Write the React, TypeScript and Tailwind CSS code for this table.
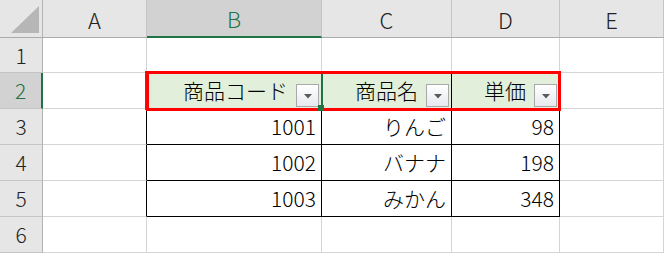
import React from "react";

const font = { fontFamily: '"Noto Sans CJK JP", "Noto Sans", sans-serif' };

function FilterButton() {
  return (
    <div className="ml-[8px] mr-[2px] mb-[1px] self-end w-[23px] h-[23px] border border-[#a9a9a9] bg-gradient-to-b from-white to-[#e6e9ef] flex items-center justify-center">
      <svg width="8" height="5" viewBox="0 0 8 5" className="mt-[2px]">
        <polygon points="0,0 8,0 4,4.5" fill="#5a5a5a" />
      </svg>
    </div>
  );
}

const hdr = "bg-[#e6e6e6] border-r border-b border-r-[#c4c4c4] border-b-[#ababab] flex items-center justify-center text-[22px] leading-none text-[#222]";
const rowHdr = "bg-[#e6e6e6] border-r border-b border-r-[#b4b4b4] border-b-[#c4c4c4] flex items-center justify-center text-[21px] leading-none text-[#222]";
const cell = "border-r border-b border-[#d4d4d4]";
const num = "flex items-center justify-end pr-[5px] text-[21px] leading-none text-black";

export default function App() {
  const body = [
    ["1001", "りんご", "98"],
    ["1002", "バナナ", "198"],
    ["1003", "みかん", "348"],
  ];
  return (
    <div className="relative w-[664px] h-[253px] overflow-hidden bg-white font-light" style={font}>
      <div className="grid grid-cols-[43px_104px_175px_130px_108px_104px] grid-rows-[38px_35px_36px_36px_36px_36px_36px]">
        {/* header row */}
        <div className="bg-[#e6e6e6] border-r border-b border-r-[#b4b4b4] border-b-[#ababab] relative">
          <svg width="42" height="37" className="block">
            <polygon points="11,33 39,6 39,33" fill="#b6b6b6" />
          </svg>
        </div>
        <div className={hdr}>A</div>
        <div className="bg-[#d2d2d2] border-r border-r-[#c4c4c4] border-b-2 border-b-[#217346] flex items-center justify-center text-[22px] leading-none text-[#217346]">B</div>
        <div className={hdr}>C</div>
        <div className={hdr}>D</div>
        <div className={hdr}>E</div>

        {/* row 1 */}
        <div className={rowHdr}>1</div>
        <div className={cell}></div>
        <div className={cell}></div>
        <div className={cell}></div>
        <div className={cell}></div>
        <div className={cell}></div>

        {/* row 2 */}
        <div className="bg-[#d2d2d2] border-r-2 border-b border-r-[#217346] border-b-[#c4c4c4] flex items-center justify-center text-[21px] leading-none text-[#217346]">2</div>
        <div className="border-r border-b border-r-black border-b-[#d4d4d4]"></div>
        <div className="bg-[#e2efda] border-r border-b border-black flex items-center justify-end text-[21px] leading-none text-black">
          <span>商品コード</span>
          <FilterButton />
        </div>
        <div className="bg-[#e2efda] border-r border-b border-black flex items-center justify-end text-[21px] leading-none text-black">
          <span>商品名</span>
          <FilterButton />
        </div>
        <div className="bg-[#e2efda] border-r border-b border-black flex items-center justify-end text-[21px] leading-none text-black">
          <span>単価</span>
          <FilterButton />
        </div>
        <div className={cell}></div>

        {/* rows 3-5 */}
        {body.map((r, i) => (
          <React.Fragment key={i}>
            <div className={rowHdr}>{i + 3}</div>
            <div className="border-r border-b border-r-black border-b-[#d4d4d4]"></div>
            <div className={"border-r border-b border-black " + num}>{r[0]}</div>
            <div className={"border-r border-b border-black " + num}>{r[1]}</div>
            <div className={"border-r border-b border-black " + num}>{r[2]}</div>
            <div className={cell}></div>
          </React.Fragment>
        ))}

        {/* row 6 */}
        <div className={rowHdr}>6</div>
        <div className={cell}></div>
        <div className={cell}></div>
        <div className={cell}></div>
        <div className={cell}></div>
        <div className={cell}></div>
      </div>

      {/* active cell border */}
      <div className="absolute left-[145px] top-[71px] w-[178px] h-[39px] border-2 border-[#217346] pointer-events-none"></div>
      {/* red highlight */}
      <div className="absolute left-[146px] top-[71px] w-[415px] h-[40px] border-[3px] border-[#ff0000] pointer-events-none"></div>
      {/* fill handle */}
      <div className="absolute left-[318px] top-[105px] w-[6px] h-[6px] bg-[#217346]"></div>
    </div>
  );
}
